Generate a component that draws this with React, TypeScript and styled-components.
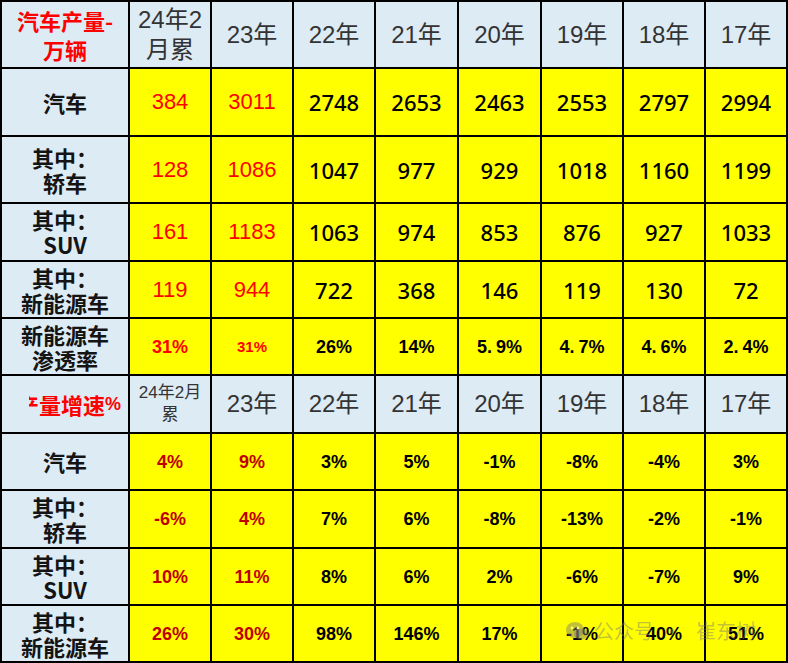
import React from "react";
import styled, { createGlobalStyle } from "styled-components";

const Global = createGlobalStyle`
  html, body { margin: 0; padding: 0; background: #ffffff; }
  body { font-family: "Liberation Sans", "Noto Sans CJK SC", sans-serif; }
`;

const Wrap = styled.div`
  position: relative;
  width: 788px;
  height: 663px;
`;

const Table = styled.table`
  border-collapse: collapse;
  table-layout: fixed;
  width: 788px;
  border: 2px solid #000;
`;

const Row = styled.tr<{ $h: number }>`
  height: ${(p) => p.$h}px;
`;

type Tone = "head" | "label" | "red" | "dark" | "black";

const toneColor: Record<Tone, string> = {
  head: "#333333",
  label: "#141414",
  red: "#ff0000",
  dark: "#c00000",
  black: "#000000",
};

const Cell = styled.td<{ $bg: "blue" | "yellow"; $tone: Tone; $size: number; $bold?: boolean; $num?: boolean }>`
  border: 2px solid #000;
  padding: 0;
  text-align: center;
  vertical-align: middle;
  background: ${(p) => (p.$bg === "blue" ? "#ddebf5" : "#ffff00")};
  color: ${(p) => toneColor[p.$tone]};
  font-size: ${(p) => p.$size}px;
  font-weight: ${(p) => (p.$bold ? 700 : p.$num ? 500 : 400)};
  line-height: 26px;
  font-family: ${(p) =>
    p.$num ? '"Noto Sans", "Liberation Sans", sans-serif' : '"Liberation Sans", "Noto Sans CJK SC", sans-serif'};
  white-space: nowrap;
  overflow: hidden;
`;

const LabelText = styled.div`
  font-family: "Noto Sans CJK SC", "Liberation Sans", sans-serif;
  font-weight: 700;
  font-size: 22px;
  line-height: 25px;
  color: #141414;
`;

const HeadCJK = styled.div<{ $size: number; $lh: number }>`
  font-family: "Liberation Sans", "Noto Sans CJK SC", sans-serif;
  font-size: ${(p) => p.$size}px;
  line-height: ${(p) => p.$lh}px;
  color: #333333;
`;

const CornerTitle = styled.div`
  font-family: "Noto Sans CJK SC", sans-serif;
  font-weight: 700;
  font-size: 22px;
  line-height: 29px;
  color: #ff0000;
`;

const ClipTitle = styled.div`
  margin-left: 27px;
  width: 92px;
  overflow: hidden;
  display: flex;
  justify-content: flex-end;
  font-family: "Noto Sans CJK SC", sans-serif;
  font-weight: 700;
  font-size: 22px;
  line-height: 26px;
  color: #ff0000;
  white-space: nowrap;
`;

const Pct = styled.span`
  font-family: "Liberation Sans", sans-serif;
  font-size: 18px;
`;

const Dot = styled.span`
  margin-right: 4px;
`;

const Watermark = styled.div`
  position: absolute;
  left: 566px;
  top: 619px;
  display: flex;
  align-items: center;
  gap: 6px;
  color: rgba(120, 120, 120, 0.45);
  font-family: "Noto Sans CJK SC", sans-serif;
  font-size: 20px;
  line-height: 24px;
  pointer-events: none;
  white-space: nowrap;
`;

const WmDot = styled.span`
  margin: 0 8px 0 2px;
`;

const years = ["23年", "22年", "21年", "20年", "19年", "18年", "17年"];

type Val = { v: string; tone: Tone; size?: number; bold?: boolean; num?: boolean };

const r = (v: string): Val => ({ v, tone: "red", size: 22 });
const k = (v: string): Val => ({ v, tone: "black", size: 22, num: true });
const p = (v: string, size = 18, tone: Tone = "black"): Val => ({ v, tone, size, bold: true });

const topRows: { label: string[]; h: number; vals: Val[] }[] = [
  { label: ["汽车"], h: 68, vals: [r("384"), r("3011"), k("2748"), k("2653"), k("2463"), k("2553"), k("2797"), k("2994")] },
  { label: ["其中：", "轿车"], h: 67, vals: [r("128"), r("1086"), k("1047"), k("977"), k("929"), k("1018"), k("1160"), k("1199")] },
  { label: ["其中：", "SUV"], h: 58, vals: [r("161"), r("1183"), k("1063"), k("974"), k("853"), k("876"), k("927"), k("1033")] },
  { label: ["其中：", "新能源车"], h: 57, vals: [r("119"), r("944"), k("722"), k("368"), k("146"), k("119"), k("130"), k("72")] },
  {
    label: ["新能源车", "渗透率"],
    h: 57,
    vals: [p("31%", 18, "red"), p("31%", 15, "red"), p("26%"), p("14%"), p("5.9%"), p("4.7%"), p("4.6%"), p("2.4%")],
  },
];

const lowRows: { label: string[]; h: number; vals: string[] }[] = [
  { label: ["汽车"], h: 57, vals: ["4%", "9%", "3%", "5%", "-1%", "-8%", "-4%", "3%"] },
  { label: ["其中：", "轿车"], h: 58, vals: ["-6%", "4%", "7%", "6%", "-8%", "-13%", "-2%", "-1%"] },
  { label: ["其中：", "SUV"], h: 57, vals: ["10%", "11%", "8%", "6%", "2%", "-6%", "-7%", "9%"] },
  { label: ["其中：", "新能源车"], h: 57, vals: ["26%", "30%", "98%", "146%", "17%", "-1%", "40%", "51%"] },
];

const widths = [128, 82, 82, 82, 83, 83, 82, 82, 82];

function Label({ lines }: { lines: string[] }) {
  return (
    <LabelText>
      {lines.map((l, i) => (
        <div key={i}>{l}</div>
      ))}
    </LabelText>
  );
}

function Value({ text }: { text: string }) {
  const i = text.indexOf(".");
  if (i < 0) return <>{text}</>;
  return (
    <>
      {text.slice(0, i)}
      <Dot>.</Dot>
      {text.slice(i + 1)}
    </>
  );
}

function WeChatIcon() {
  return (
    <svg width="22" height="18" viewBox="0 0 22 18">
      <ellipse cx="9" cy="8" rx="9" ry="8" fill="currentColor" />
      <circle cx="6" cy="6" r="1.4" fill="#ffff66" />
      <circle cx="12" cy="6" r="1.4" fill="#ffff66" />
      <ellipse cx="15" cy="12" rx="7" ry="5.5" fill="currentColor" />
    </svg>
  );
}

export default function App() {
  return (
    <Wrap>
      <Global />
      <Table>
        <colgroup>
          {widths.map((w, i) => (
            <col key={i} style={{ width: w }} />
          ))}
        </colgroup>
        <tbody>
          <Row $h={67}>
            <Cell $bg="blue" $tone="red" $size={22}>
              <CornerTitle>
                <div>汽车产量-</div>
                <div>万辆</div>
              </CornerTitle>
            </Cell>
            <Cell $bg="blue" $tone="head" $size={24}>
              <HeadCJK $size={24} $lh={30}>
                <div>24年2</div>
                <div>月累</div>
              </HeadCJK>
            </Cell>
            {years.map((y) => (
              <Cell key={y} $bg="blue" $tone="head" $size={24}>
                <HeadCJK $size={24} $lh={30}>{y}</HeadCJK>
              </Cell>
            ))}
          </Row>
          {topRows.map((row, ri) => (
            <Row key={"t" + ri} $h={row.h}>
              <Cell $bg="blue" $tone="label" $size={22}>
                <Label lines={row.label} />
              </Cell>
              {row.vals.map((v, vi) => (
                <Cell key={vi} $bg="yellow" $tone={v.tone} $size={v.size ?? 22} $bold={v.bold} $num={v.num}>
                  <Value text={v.v} />
                </Cell>
              ))}
            </Row>
          ))}
          <Row $h={58}>
            <Cell $bg="blue" $tone="red" $size={22}>
              <ClipTitle>
                <span>汽车产量增速</span>
                <Pct>%</Pct>
              </ClipTitle>
            </Cell>
            <Cell $bg="blue" $tone="head" $size={17}>
              <HeadCJK $size={17} $lh={22}>
                <div>24年2月</div>
                <div>累</div>
              </HeadCJK>
            </Cell>
            {years.map((y) => (
              <Cell key={"l" + y} $bg="blue" $tone="head" $size={24}>
                <HeadCJK $size={24} $lh={30}>{y}</HeadCJK>
              </Cell>
            ))}
          </Row>
          {lowRows.map((row, ri) => (
            <Row key={"b" + ri} $h={row.h}>
              <Cell $bg="blue" $tone="label" $size={22}>
                <Label lines={row.label} />
              </Cell>
              {row.vals.map((v, vi) => (
                <Cell key={vi} $bg="yellow" $tone={vi < 2 ? "dark" : "black"} $size={18} $bold>
                  {v}
                </Cell>
              ))}
            </Row>
          ))}
        </tbody>
      </Table>
      <Watermark>
        <WeChatIcon />
        <span>公众号</span>
        <WmDot>·</WmDot>
        <span>崔东树</span>
      </Watermark>
    </Wrap>
  );
}
